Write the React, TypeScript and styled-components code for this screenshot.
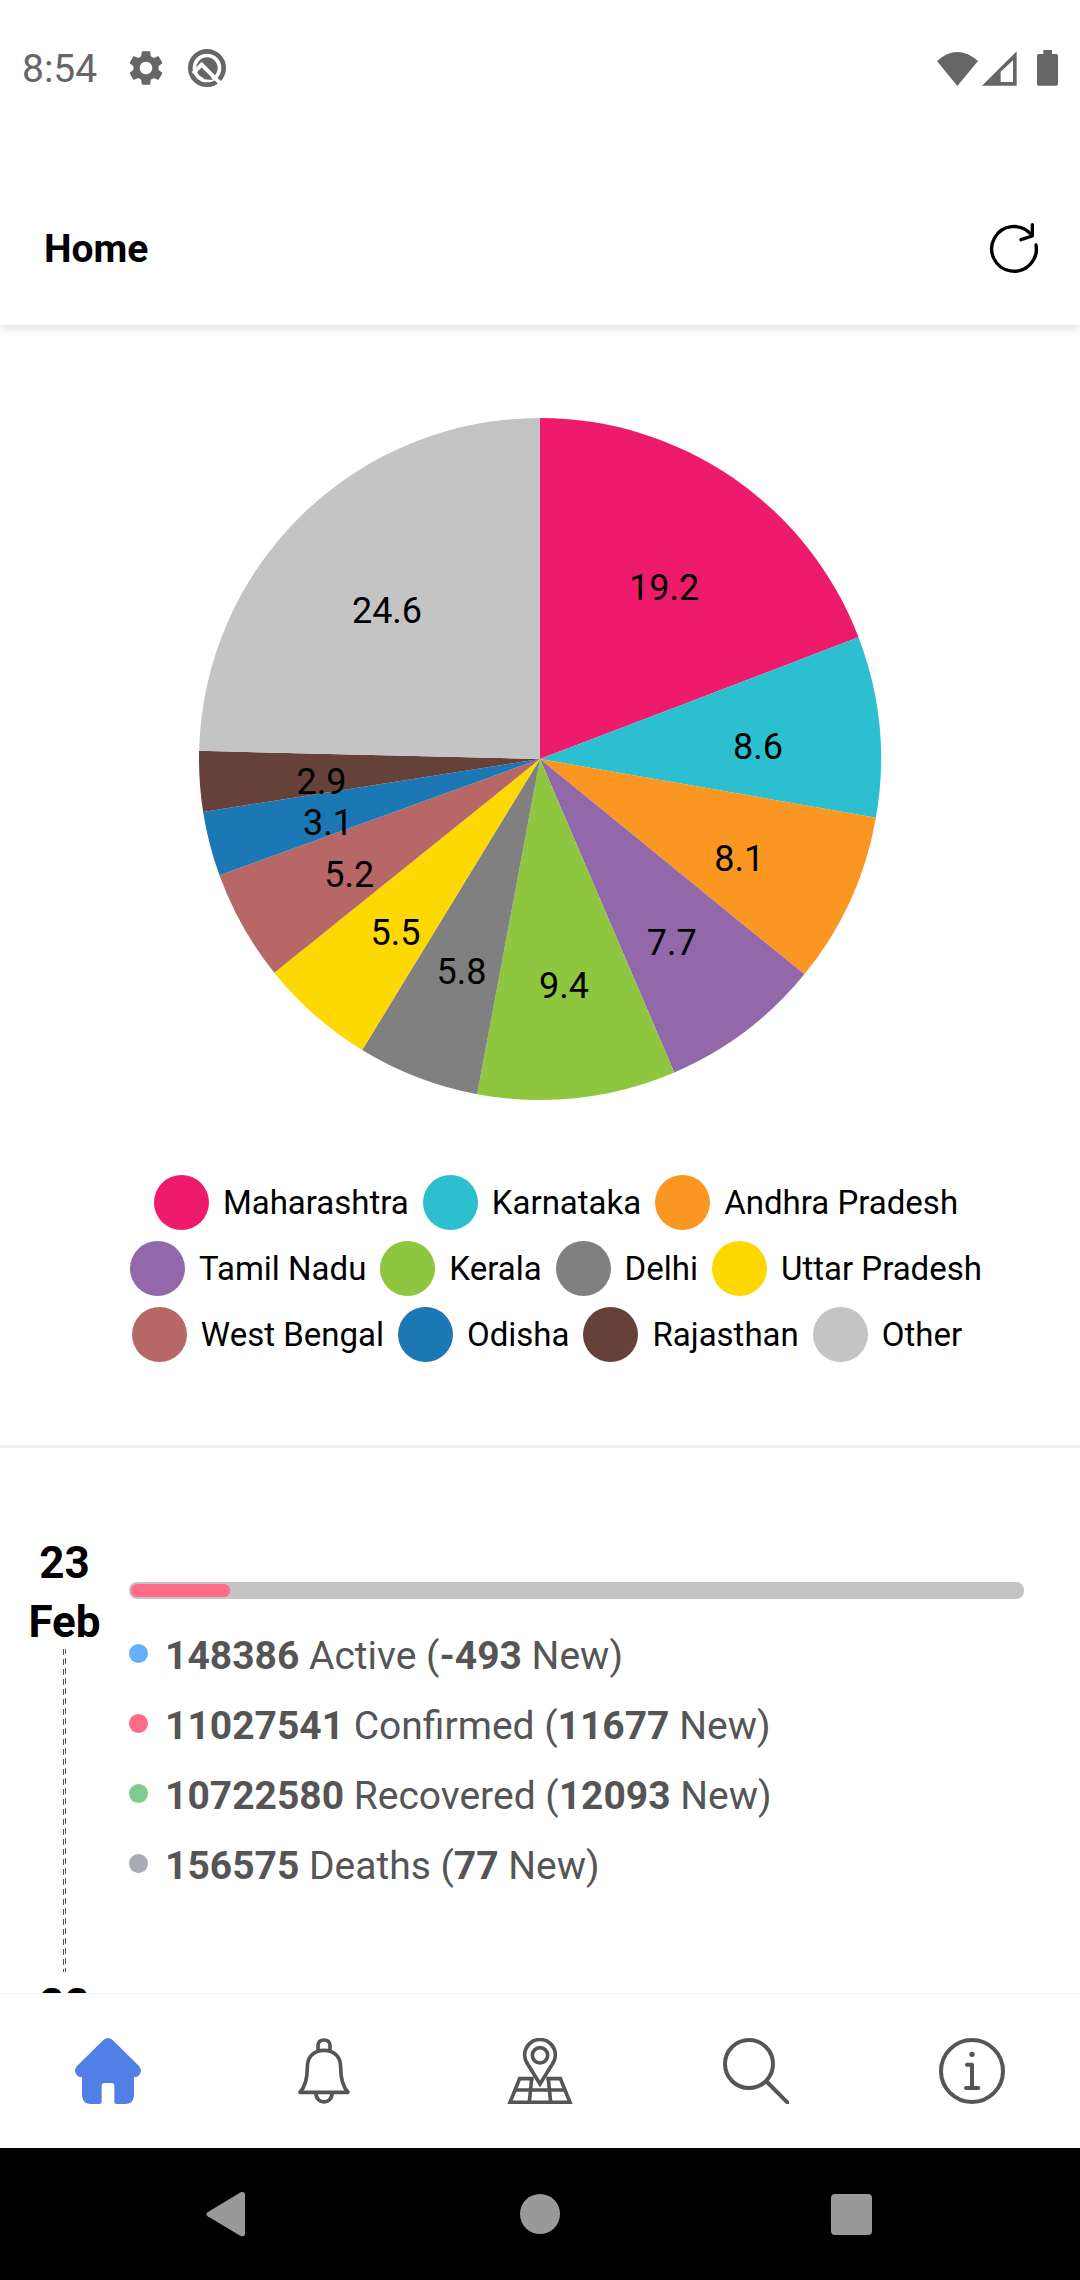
import React from "react";
import styled, { createGlobalStyle } from "styled-components";
import { MdSettings } from "react-icons/md";

const GlobalStyle = createGlobalStyle`
  *, *::before, *::after { box-sizing: border-box; }
  body { margin: 0; background: #fff; font-family: Roboto, "Liberation Sans", sans-serif; }
  ul, h1, h2, p { margin: 0; padding: 0; list-style: none; }
  svg { display: block; flex: none; }
`;

const Screen = styled.div`
  display: flex;
  flex-direction: column;
  height: 100vh;
  background: #fff;
`;

const StatusBar = styled.div`
  display: flex;
  align-items: center;
  justify-content: space-between;
  flex: none;
  height: 136px;
  padding: 0 22px;
  color: #666;
  font-size: 39px;
`;

const StatusLeft = styled.div`
  display: flex;
  align-items: center;
  gap: 20px;
`;

const Clock = styled.time`
  margin-right: 8px;
  padding-top: 2px;
`;

const StatusRight = styled.div`
  display: flex;
  align-items: flex-end;
  gap: 4px;
`;

const BatteryIcon = styled.svg`
  margin-left: 16px;
`;

const Header = styled.header`
  position: relative;
  display: flex;
  align-items: center;
  justify-content: space-between;
  flex: none;
  height: 154px;
  margin-top: 35px;
  padding: 2px 40px 0 44px;
  box-shadow: 0 2px 10px rgba(0, 0, 0, 0.16);
  clip-path: inset(0 0 -14px 0);
`;

const Title = styled.h1`
  font-size: 39px;
  font-weight: 700;
  color: #000;
`;

const IconButton = styled.button`
  display: flex;
  align-items: center;
  justify-content: center;
  padding: 0;
  border: 0;
  background: none;
  cursor: pointer;
`;

const Content = styled.main`
  flex: 1;
  min-height: 0;
  overflow-y: auto;
  scrollbar-width: none;
`;

const ChartSection = styled.section`
  display: flex;
  flex-direction: column;
  align-items: center;
  gap: 74px;
  padding: 92px 0 83px;
  border-bottom: 3px solid #f0f0f0;
`;

const SliceLabel = styled.text`
  font-size: 36px;
  text-anchor: middle;
  fill: #000;
`;

const Legend = styled.ul`
  display: flex;
  flex-wrap: wrap;
  justify-content: center;
  gap: 11px 14px;
  width: 100%;
  padding: 0 74px 0 106px;

  li:last-child {
    margin-right: 18px;
  }
`;

const LegendItem = styled.li`
  display: flex;
  align-items: center;
  gap: 14px;
  font-size: 33px;
  color: #000;
`;

const Swatch = styled.span<{ $color: string }>`
  width: 55px;
  height: 55px;
  border-radius: 50%;
  background: ${(p) => p.$color};
`;

const Timeline = styled.section`
  padding: 86px 56px 0 0;
`;

const Day = styled.article`
  display: flex;
  padding-bottom: 4px;
`;

const DateColumn = styled.div`
  display: flex;
  flex-direction: column;
  align-items: center;
  width: 129px;
`;

const DateText = styled.h2`
  width: 80px;
  margin-bottom: -3px;
  font-size: 44px;
  line-height: 59px;
  font-weight: 700;
  text-align: center;
  color: #000;
`;

const DashedLine = styled.div<{ $height: number }>`
  width: 3px;
  height: ${(p) => p.$height}px;
  background:
    repeating-linear-gradient(#555 0 6px, transparent 6px 10px) left / 1px 100% no-repeat,
    repeating-linear-gradient(#555 0 5px, transparent 5px 9px, #555 9px 10px) right / 1px 100% no-repeat;
`;

const DayBody = styled.div`
  flex: 1;
  padding-top: 48px;
`;

const Track = styled.div`
  height: 17px;
  margin-bottom: 22px;
  padding: 2px;
  border-radius: 8px;
  background: #c4c4c4;
`;

const Fill = styled.div`
  height: 100%;
  border-radius: 6px;
  background: #ff6b88;
`;

const Stat = styled.li`
  display: flex;
  align-items: center;
  gap: 17px;
  height: 70px;
  font-size: 39px;
  color: #555;
`;

const Dot = styled.span<{ $color: string }>`
  width: 19px;
  height: 19px;
  margin-bottom: 6px;
  border-radius: 50%;
  background: ${(p) => p.$color};
`;

const TabBar = styled.nav`
  display: grid;
  grid-template-columns: repeat(5, 1fr);
  flex: none;
  height: 155px;
  border-top: 1px solid #f5f5f5;
  background: #fff;
`;

const Tab = styled.a<{ $active?: boolean }>`
  display: flex;
  align-items: center;
  justify-content: center;
  color: ${(p) => (p.$active ? "#517fe6" : "#555")};
`;

const SystemBar = styled.div`
  display: flex;
  align-items: center;
  justify-content: center;
  gap: 251px;
  flex: none;
  height: 132px;
  background: #000;
  color: #999;
`;

const SystemButton = styled(IconButton)`
  width: 60px;
  height: 60px;
  color: inherit;
`;

type Slice = { name: string; share: number; color: string };

const slices: Slice[] = [
  { name: "Maharashtra", share: 19.19, color: "#ee1a6b" },
  { name: "Karnataka", share: 8.56, color: "#2bbfcf" },
  { name: "Andhra Pradesh", share: 8.13, color: "#fa9722" },
  { name: "Tamil Nadu", share: 7.68, color: "#9268aa" },
  { name: "Kerala", share: 9.39, color: "#8fc640" },
  { name: "Delhi", share: 5.78, color: "#808080" },
  { name: "Uttar Pradesh", share: 5.49, color: "#fdd802" },
  { name: "West Bengal", share: 5.24, color: "#b76765" },
  { name: "Odisha", share: 3.06, color: "#1c77b5" },
  { name: "Rajasthan", share: 2.86, color: "#66413a" },
  { name: "Other", share: 24.62, color: "#c4c4c4" },
];

const RADIUS = 341;
const LABEL_RADIUS = 219;

function point(percent: number, radius: number) {
  const angle = (percent / 100) * Math.PI * 2;
  return { x: Math.sin(angle) * radius, y: -Math.cos(angle) * radius };
}

function PieChart() {
  let total = 0;
  const parts = slices.map((slice) => {
    const start = total;
    total += slice.share;
    return { ...slice, start, end: total };
  });
  return (
    <svg width="684" height="684" viewBox="-342 -342 684 684" role="img" aria-label="Share of cases by state">
      {parts.map((p) => {
        const a = point(p.start, RADIUS);
        const b = point(p.end, RADIUS);
        return <path key={p.name} fill={p.color} d={`M0 0L${a.x} ${a.y}A${RADIUS} ${RADIUS} 0 0 1 ${b.x} ${b.y}Z`} />;
      })}
      {parts.map((p) => {
        const c = point((p.start + p.end) / 2, LABEL_RADIUS);
        return (
          <SliceLabel key={p.name} x={c.x} y={c.y + 21}>
            {p.share.toFixed(1)}
          </SliceLabel>
        );
      })}
    </svg>
  );
}

type StatData = { total: number; label: string; fresh: number; color: string };
type DayData = { day: string; month: string; progress: number; stats: StatData[] };

const days: DayData[] = [
  {
    day: "23",
    month: "Feb",
    progress: 11.1,
    stats: [
      { total: 148386, label: "Active", fresh: -493, color: "#66aeff" },
      { total: 11027541, label: "Confirmed", fresh: 11677, color: "#ff6b88" },
      { total: 10722580, label: "Recovered", fresh: 12093, color: "#80cb8f" },
      { total: 156575, label: "Deaths", fresh: 77, color: "#a6abb5" },
    ],
  },
  { day: "22", month: "Feb", progress: 11.1, stats: [] },
];

function HomeIcon() {
  return (
    <svg width="66" height="66" viewBox="225 174 198 198" fill="currentColor">
      <path d="M311 179Q324 169 337 179L417 258Q427 269 420 281Q415 291 402 291V348Q400 370 378 372H350Q343 372 343 364V318Q343 309 334 309H314Q305 309 305 318V364Q305 372 298 372H270Q248 370 246 348V291Q233 291 228 281Q221 269 231 258Z" />
    </svg>
  );
}

function BellIcon() {
  return (
    <svg width="66" height="66" viewBox="873 174 198 198" fill="none" stroke="currentColor" strokeWidth="11" strokeLinejoin="round" strokeLinecap="round">
      <path d="M954 213V196Q955 180 972 180Q989 180 990 196V213" />
      <path d="M972 211C938 211 922 234 922 262C922 294 914 322 900 337H1044C1030 322 1022 294 1022 262C1022 234 1006 211 972 211Z" />
      <path d="M948 340C948 374 996 374 996 340" />
    </svg>
  );
}

function MapIcon() {
  return (
    <svg width="66" height="66" viewBox="321 174 198 198" fill="none" stroke="currentColor" strokeWidth="11">
      <path d="M401 296H359L330 367H510L481 296H439" />
      <path d="M345 330H495M395 296L388 367M445 296L452 367" />
      <path d="M420 312L381 249A46 46 0 1 1 459 249Z" fill="#fff" />
      <circle cx="420" cy="226" r="23" />
    </svg>
  );
}

function SearchIcon() {
  return (
    <svg width="66" height="66" viewBox="969 174 198 198" fill="none" stroke="currentColor" strokeWidth="12" strokeLinecap="round">
      <circle cx="1047" cy="252" r="72" />
      <path d="M1101 306L1162 367" />
    </svg>
  );
}

function InfoIcon() {
  return (
    <svg width="66" height="66" viewBox="477 174 198 198" fill="none" stroke="currentColor" strokeWidth="12" strokeLinecap="round" strokeLinejoin="round">
      <circle cx="576" cy="273" r="93" />
      <circle cx="576" cy="223" r="8" fill="currentColor" stroke="none" />
      <path d="M561 254H576V324M558 324H595" />
    </svg>
  );
}

const tabs = [
  { label: "Home", href: "#home", Icon: HomeIcon, active: true },
  { label: "Alerts", href: "#alerts", Icon: BellIcon },
  { label: "Map", href: "#map", Icon: MapIcon },
  { label: "Search", href: "#search", Icon: SearchIcon },
  { label: "About", href: "#about", Icon: InfoIcon },
];

export default function App() {
  return (
    <Screen>
      <GlobalStyle />
      <StatusBar>
        <StatusLeft>
          <Clock>8:54</Clock>
          <MdSettings size={42} />
          <svg width="40" height="40" viewBox="188 22 120 120" fill="none">
            <circle cx="248" cy="82" r="50" stroke="currentColor" strokeWidth="14" />
            <circle cx="248" cy="82" r="32" fill="currentColor" />
            <path d="M206 98L232 72L294 134" stroke="#fff" strokeWidth="12" />
            <path d="M222 92L232 84L266 118L240 116Z" fill="currentColor" />
          </svg>
        </StatusLeft>
        <StatusRight>
          <svg width="41" height="34" viewBox="114 91 123 102" fill="currentColor">
            <path d="M114 118Q175 64 237 118L175 193Z" />
          </svg>
          <svg width="35" height="35" viewBox="247 90 105 105" fill="currentColor" fillRule="evenodd">
            <path d="M247 194L351 91V194ZM303 152V183H340V118Z" />
          </svg>
          <BatteryIcon width="21" height="36" viewBox="411 87 63 108" fill="currentColor">
            <path d="M430 87H456V99H469Q474 99 474 104V189Q474 194 469 194H416Q411 194 411 189V104Q411 99 416 99H430Z" />
          </BatteryIcon>
        </StatusRight>
      </StatusBar>

      <Header>
        <Title>Home</Title>
        <IconButton aria-label="Refresh">
          <svg width="52" height="52" viewBox="264 609 156 156" fill="none" stroke="#000" strokeWidth="10" strokeLinecap="round" strokeLinejoin="round">
            <path d="M408 675A67 67 0 1 1 392 642" />
            <path d="M397 614V648L363 659" />
          </svg>
        </IconButton>
      </Header>

      <Content>
        <ChartSection>
          <PieChart />
          <Legend>
            {slices.map((s) => (
              <LegendItem key={s.name}>
                <Swatch $color={s.color} />
                {s.name}
              </LegendItem>
            ))}
          </Legend>
        </ChartSection>

        <Timeline>
          {days.map((d) => (
            <Day key={d.day}>
              <DateColumn>
                <DateText>
                  {d.day} {d.month}
                </DateText>
                <DashedLine $height={240} />
                <DashedLine $height={83} />
              </DateColumn>
              <DayBody>
                <Track>
                  <Fill style={{ width: `${d.progress}%` }} />
                </Track>
                <ul>
                  {d.stats.map((s) => (
                    <Stat key={s.label}>
                      <Dot $color={s.color} />
                      <p>
                        <b>{s.total}</b> {s.label} (<b>{s.fresh}</b> New)
                      </p>
                    </Stat>
                  ))}
                </ul>
              </DayBody>
            </Day>
          ))}
        </Timeline>
      </Content>

      <TabBar>
        {tabs.map(({ label, href, Icon, active }) => (
          <Tab key={label} href={href} aria-label={label} $active={active}>
            <Icon />
          </Tab>
        ))}
      </TabBar>

      <SystemBar>
        <SystemButton aria-label="Back">
          <svg width="46" height="46" viewBox="618 634 138 138" fill="currentColor">
            <path d="M623 698L722 638Q735 634 735 646V761Q735 773 722 769L623 710Q616 704 623 698Z" />
          </svg>
        </SystemButton>
        <SystemButton aria-label="Home screen">
          <svg width="40" height="40" viewBox="0 0 40 40" fill="currentColor">
            <circle cx="20" cy="20" r="20" />
          </svg>
        </SystemButton>
        <SystemButton aria-label="Recent apps">
          <svg width="41" height="41" viewBox="0 0 41 41" fill="currentColor">
            <rect width="41" height="41" rx="4" />
          </svg>
        </SystemButton>
      </SystemBar>
    </Screen>
  );
}
